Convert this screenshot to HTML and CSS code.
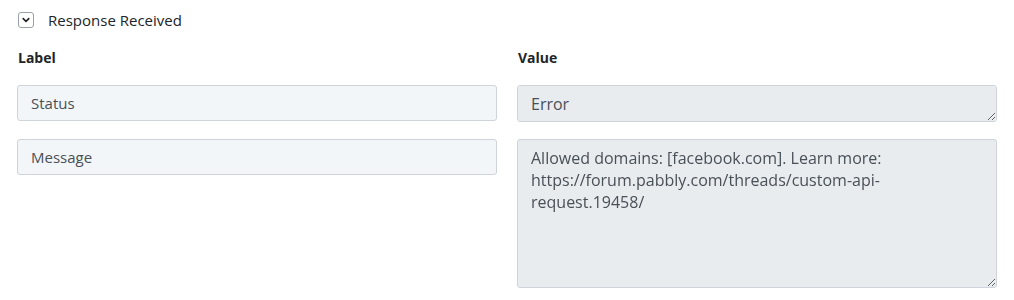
FILE: index.html
```html
<!DOCTYPE html>
<html lang="en">
<head>
    <meta charset="UTF-8">
    <title>Response Received</title>
    <link rel="stylesheet" href="styles.css">
</head>
<body>

    <div class="section-head">
        <span class="toggle">
            <svg width="10" height="10" viewBox="0 0 10 10"><path d="M2.2 3.6 L5 6.4 L7.8 3.6" fill="none" stroke="#222" stroke-width="1.6" stroke-linecap="round" stroke-linejoin="round"/></svg>
        </span>
        <span class="section-title">Response Received</span>
    </div>

    <div class="grid">
        <div class="col-head">Label</div>
        <div class="col-head">Value</div>

        <!-- Status row -->
        <input class="field label-field" type="text" value="Status" readonly>
        <textarea class="field value-field short" readonly>Error</textarea>

        <!-- Message row -->
        <input class="field label-field" type="text" value="Message" readonly>
        <textarea class="field value-field tall" readonly>Allowed domains: [facebook.com]. Learn more: https://forum.pabbly.com/threads/custom-api-request.19458/</textarea>
    </div>

</body>
</html>
```

FILE: styles.css
```css
body {
    font-family: 'Open Sans', sans-serif;
    margin: 0;
    padding: 11px 17px 0 17px;
    background-color: #fff;
    color: #212529;
}

.section-head {
    display: flex;
    align-items: center;
    height: 18px;
    padding-left: 1px;
}

.toggle {
    width: 14px;
    height: 14px;
    border: 1px solid #9aa0a6;
    border-radius: 3px;
    display: flex;
    align-items: center;
    justify-content: center;
}

.section-title {
    font-size: 15px;
    margin-left: 14px;
}

.grid {
    display: grid;
    grid-template-columns: 1fr 1fr;
    column-gap: 20px;
    row-gap: 17px;
    margin-top: 20px;
}

.col-head {
    font-size: 14px;
    font-weight: 700;
    padding-left: 1px;
    line-height: 18px;
    margin-bottom: 1px;
}

.field {
    box-sizing: border-box;
    width: 100%;
    margin: 0;
    font-family: 'Open Sans', sans-serif;
    color: #495057;
    border: 1px solid #ced4da;
    border-radius: 3px;
    outline: none;
}

.label-field {
    height: 36px;
    padding: 0 13px;
    font-size: 15px;
    background-color: #f3f6f9;
}

.value-field {
    display: block;
    padding: 7px 13px;
    font-size: 16px;
    line-height: 22px;
    background-color: #e9ecef;
    resize: vertical;
}

.value-field.short {
    height: 37px;
}

.value-field.tall {
    height: 149px;
}
```
